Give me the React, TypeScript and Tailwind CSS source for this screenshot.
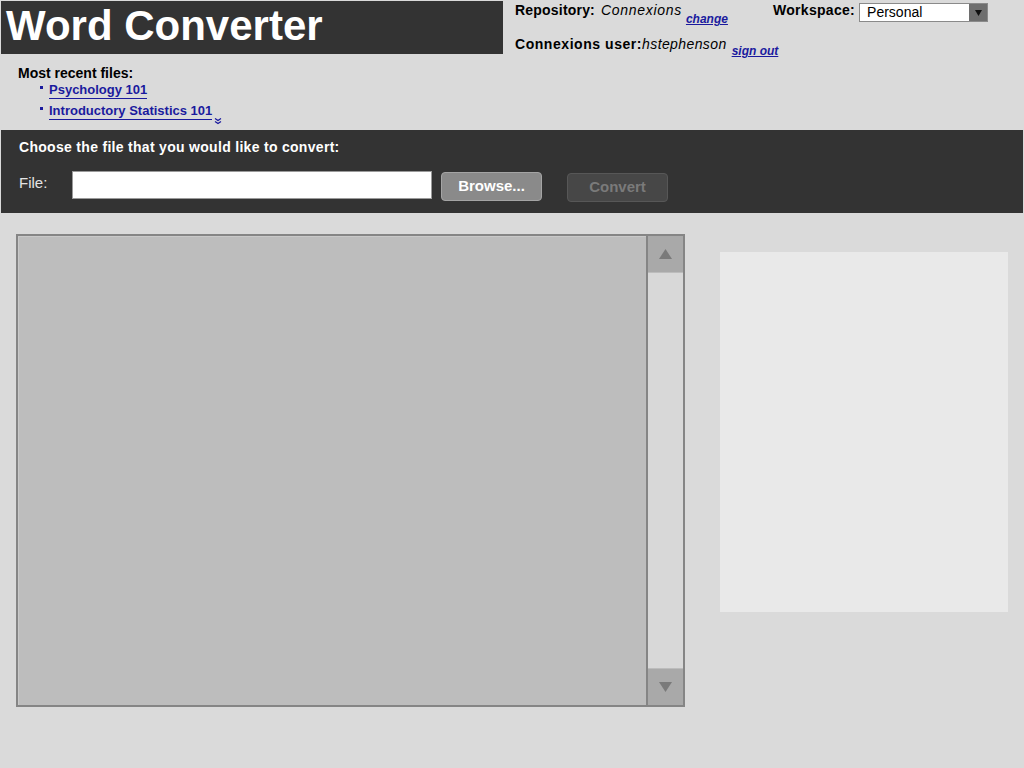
import React from 'react';

const font = { fontFamily: '"Liberation Sans", Arial, sans-serif' };

const RecentLink: React.FC<{ label: string; offset?: string }> = ({ label, offset = 'ml-0' }) => (
    <div className={`flex items-start ${offset}`}>
        <span className="mt-[4px] mr-[6px] w-[3px] h-[3px] bg-[#1a1a9e]" />
        <a className="text-[13px] font-bold text-[#1a1a9e] leading-[15px] border-b border-[#1a1a9e] pb-[1px]">
            {label}
        </a>
    </div>
);

export default function App() {
    return (
        <div className="w-[1024px] h-[768px] bg-[#dadada] overflow-hidden" style={font}>
            {/* header */}
            <div className="flex items-start h-[54px]">
                <div className="mt-[1px] ml-[1px] w-[502px] h-[53px] bg-[#333333] pl-[5px] pt-[2px]">
                    <h1 className="text-[42px] font-bold text-white leading-[46px]">Word Converter</h1>
                </div>
                <div className="ml-[12px] pt-[2px]">
                    <div className="flex items-start">
                        <span className="text-[14px] font-bold text-black leading-[16px] tracking-[0.2px]">Repository:</span>
                        <span className="ml-[6px] text-[14px] italic text-black leading-[16px] tracking-[0.7px]">Connexions</span>
                        <a className="ml-[4px] mt-[10px] text-[12px] font-bold italic underline text-[#1a1a9e] leading-[14px]">change</a>
                        <span className="ml-[45px] text-[14px] font-bold text-black leading-[16px] tracking-[0.3px]">Workspace:</span>
                        <div className="ml-[4px] mt-[1px] w-[129px] h-[19px] bg-white border border-[#8a8a8a] flex">
                            <span className="flex-1 pl-[7px] text-[14px] text-black leading-[17px]">Personal</span>
                            <span className="w-[18px] h-full bg-[#6e6e6e] flex items-center justify-center">
                                <svg width="7" height="6" viewBox="0 0 7 6"><path d="M0 0h7L3.5 6z" fill="#111" /></svg>
                            </span>
                        </div>
                    </div>
                    <div className="flex items-start mt-[10px]">
                        <span className="text-[14px] font-bold text-black leading-[16px] tracking-[0.55px]">Connexions user:</span>
                        <span className="text-[14px] italic text-black leading-[16px] tracking-[0.4px]">hstephenson</span>
                        <a className="ml-[5px] mt-[8px] text-[12px] font-bold italic underline text-[#1a1a9e] leading-[14px]">sign out</a>
                    </div>
                </div>
            </div>

            {/* recent files */}
            <div className="pl-[18px] pt-[11px] h-[76px]">
                <p className="text-[14px] font-bold text-black leading-[16px]">Most recent files:</p>
                <div className="pl-[22px] mt-[1px] flex flex-col gap-[4px]">
                    <RecentLink label="Psychology 101" />
                    <div className="flex items-start">
                        <RecentLink label="Introductory Statistics 101" />
                        <svg className="ml-[2px] mt-[15px]" width="8" height="7" viewBox="0 0 8 7">
                            <path d="M1 0.5l3 2 3-2M1 3.5l3 2 3-2" fill="none" stroke="#1a1a9e" strokeWidth="1.3" />
                        </svg>
                    </div>
                </div>
            </div>

            {/* file chooser band */}
            <div className="mx-[1px] h-[83px] bg-[#333333] pl-[18px] pt-[9px]">
                <p className="text-[14px] font-bold text-white leading-[16px] tracking-[0.3px]">
                    Choose the file that you would like to convert:
                </p>
                <div className="flex items-start mt-[16px]">
                    <span className="w-[53px] mt-[3px] text-[15px] text-[#e4e4e4] leading-[18px]">File:</span>
                    <div className="w-[360px] h-[28px] bg-white border border-[#9a9a9a]" />
                    <button className="ml-[9px] mt-[1px] w-[101px] h-[29px] rounded-[4px] bg-[#8a8a8a] border border-[#a4a4a4] text-[15px] font-bold text-white">
                        Browse...
                    </button>
                    <button className="ml-[25px] mt-[2px] w-[101px] h-[29px] rounded-[4px] bg-[#474747] border border-[#575757] text-[15px] font-bold text-[#7a7a7a]">
                        Convert
                    </button>
                </div>
            </div>

            {/* main area */}
            <div className="flex items-start pl-[16px] pt-[21px]">
                <div className="w-[669px] h-[473px] border-2 border-[#858585] bg-[#bdbdbd] flex">
                    <div className="flex-1 border-l border-t border-[#c9c9c9]" />
                    <div className="w-[37px] border-l-2 border-[#858585] bg-[#d8d8d8] flex flex-col justify-between">
                        <div className="h-[37px] bg-[#a9a9a9] border-b border-[#bcbcbc] flex items-center justify-center">
                            <svg width="13" height="10" viewBox="0 0 13 10"><path d="M6.5 0L13 10H0z" fill="#7a7a7a" /></svg>
                        </div>
                        <div className="h-[37px] bg-[#a9a9a9] border-t border-[#bcbcbc] flex items-center justify-center">
                            <svg width="13" height="10" viewBox="0 0 13 10"><path d="M0 0h13L6.5 10z" fill="#7a7a7a" /></svg>
                        </div>
                    </div>
                </div>
                <div className="ml-[35px] mt-[18px] w-[288px] h-[360px] bg-[#e9e9e9]" />
            </div>
        </div>
    );
}
